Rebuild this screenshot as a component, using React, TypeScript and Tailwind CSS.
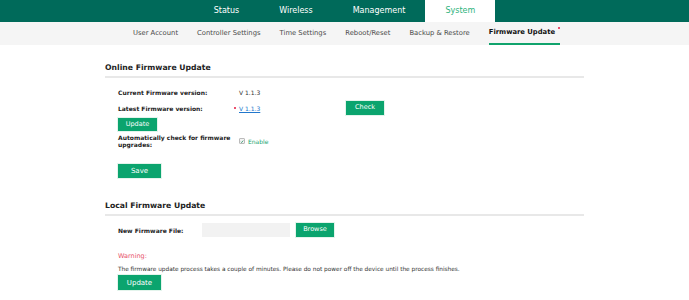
import React from "react";

const tabs = ["Status", "Wireless", "Management", "System"];
const subTabs = [
  "User Account",
  "Controller Settings",
  "Time Settings",
  "Reboot/Reset",
  "Backup & Restore",
  "Firmware Update",
];

function GreenButton({ label, className }: { label: string; className: string }) {
  return (
    <button
      type="button"
      className={[
        "flex items-center justify-center bg-[#0ba46e] text-white text-[6.5px] shadow-[0_0_0_1px_#e3f4ec]",
        className,
      ].join(" ")}
    >
      {label}
    </button>
  );
}

function SectionTitle({ title }: { title: string }) {
  return (
    <div className="border-b-2 border-[#e8e8e8] pb-[3px] text-[7.7px] font-bold text-[#222] leading-[10px]">
      {title}
    </div>
  );
}

export default function App() {
  return (
    <div
      className="w-[689px] h-[300px] bg-white overflow-hidden"
      style={{ fontFamily: "'DejaVu Sans', Tahoma, Verdana, sans-serif" }}
    >
      {/* top navigation */}
      <div className="h-[22px] bg-[#006a5a] flex justify-center">
        <div className="flex">
          {tabs.map((t) => {
            const active = t === "System";
            return (
              <div
                key={t}
                className={[
                  "h-[22px] px-[20px] flex items-center text-[8px]",
                  active ? "bg-white text-[#2db37c]" : "text-white",
                ].join(" ")}
              >
                {t}
              </div>
            );
          })}
        </div>
      </div>

      {/* sub navigation */}
      <div className="h-[23px] bg-[#f5f5f5] flex justify-center">
        <div className="flex gap-[19px] pl-[4px]">
          {subTabs.map((t) => {
            const active = t === "Firmware Update";
            return (
              <div
                key={t}
                className={[
                  "relative h-[23px] flex items-center text-[6.8px]",
                  active ? "font-bold text-[#111] border-b-2 border-[#10a36c] pr-[5px]" : "text-[#4a4a4a]",
                ].join(" ")}
              >
                {t}
                {active ? (
                  <span className="absolute right-[0px] top-[5px] w-[2px] h-[2px] rounded-full bg-[#e4173e]" />
                ) : null}
              </div>
            );
          })}
        </div>
      </div>

      {/* content */}
      <div className="ml-[105px] w-[479px]">
        <div className="pt-[18px]">
          <SectionTitle title="Online Firmware Update" />
        </div>

        <div className="pl-[13px] text-[6px] text-[#222]">
          <div className="flex items-center h-[16px] mt-[6px]">
            <div className="w-[121px] font-bold">Current Firmware version:</div>
            <div className="text-[#333]">V 1.1.3</div>
          </div>
          <div className="flex items-center h-[16px]">
            <div className="w-[116px] font-bold">Latest Firmware version:</div>
            <span className="w-[2px] h-[2px] rounded-full bg-[#e4173e] mr-[3px]" />
            <a className="underline text-[#2277cc] w-[107px]" href="#">
              V 1.1.3
            </a>
            <GreenButton label="Check" className="w-[38px] h-[14px]" />
          </div>
          <GreenButton label="Update" className="w-[39px] h-[13px] mt-[2px]" />
          <div className="flex items-center mt-[3px]">
            <div className="w-[121px] font-bold leading-[7px]">
              Automatically check for firmware
              <br />
              upgrades:
            </div>
            <div className="flex items-center gap-[3px] text-[#17a56f]">
              <span className="w-[6px] h-[6px] border border-[#bbb] rounded-[1px] bg-[#f4f4f4] flex items-center justify-center">
                <svg width="5" height="5" viewBox="0 0 10 10">
                  <path d="M2 5.5 L4.2 7.6 L8.2 2.6" stroke="#1d8a5d" strokeWidth="1.8" fill="none" />
                </svg>
              </span>
              Enable
            </div>
          </div>
          <GreenButton label="Save" className="w-[43px] h-[14px] mt-[16px] text-[7px]" />
        </div>

        <div className="pt-[23px]">
          <SectionTitle title="Local Firmware Update" />
        </div>

        <div className="pl-[13px] text-[6px] text-[#222]">
          <div className="flex items-center mt-[7px]">
            <div className="w-[84px] font-bold">New Firmware File:</div>
            <div className="w-[88px] h-[14px] bg-[#f2f2f2]" />
            <GreenButton label="Browse" className="w-[38px] h-[14px] ml-[6px]" />
          </div>
          <div className="mt-[15px] text-[#e8536b] text-[6.5px]">Warning:</div>
          <div className="mt-[3px] text-[#333] text-[5.8px] whitespace-nowrap">
            The firmware update process takes a couple of minutes. Please do not power off the device until the
            process finishes.
          </div>
          <GreenButton label="Update" className="w-[43px] h-[15px] mt-[2px] text-[7px]" />
        </div>
      </div>
    </div>
  );
}
